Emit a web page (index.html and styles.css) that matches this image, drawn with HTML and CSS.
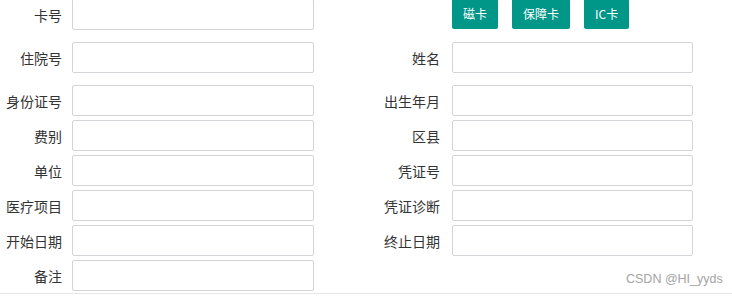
FILE: index.html
```html
<!DOCTYPE html>
<html lang="zh-CN">
<head>
<meta charset="utf-8">
<title>表单</title>
<link rel="stylesheet" href="styles.css">
</head>
<body>
<form class="form">
  <div class="row row-wide">
    <div class="field left"><label class="lbl">卡号</label><input class="inp" type="text"></div>
    <div class="field right"><span class="lbl"></span>
      <div class="btns"><button type="button" class="btn">磁卡</button><button type="button" class="btn">保障卡</button><button type="button" class="btn">IC卡</button></div>
    </div>
  </div>
  <div class="row row-wide">
    <div class="field left"><label class="lbl">住院号</label><input class="inp" type="text"></div>
    <div class="field right"><label class="lbl">姓名</label><input class="inp" type="text"></div>
  </div>
  <div class="row">
    <div class="field left"><label class="lbl">身份证号</label><input class="inp" type="text"></div>
    <div class="field right"><label class="lbl">出生年月</label><input class="inp" type="text"></div>
  </div>
  <div class="row">
    <div class="field left"><label class="lbl">费别</label><input class="inp" type="text"></div>
    <div class="field right"><label class="lbl">区县</label><input class="inp" type="text"></div>
  </div>
  <div class="row">
    <div class="field left"><label class="lbl">单位</label><input class="inp" type="text"></div>
    <div class="field right"><label class="lbl">凭证号</label><input class="inp" type="text"></div>
  </div>
  <div class="row">
    <div class="field left"><label class="lbl">医疗项目</label><input class="inp" type="text"></div>
    <div class="field right"><label class="lbl">凭证诊断</label><input class="inp" type="text"></div>
  </div>
  <div class="row">
    <div class="field left"><label class="lbl">开始日期</label><input class="inp" type="text"></div>
    <div class="field right"><label class="lbl">终止日期</label><input class="inp" type="text"></div>
  </div>
  <div class="row">
    <div class="field left"><label class="lbl">备注</label><input class="inp" type="text"></div>
  </div>
</form>
<div class="watermark">CSDN @HI_yyds</div>
</body>
</html>
```
FILE: styles.css
```css
html, body {
  margin: 0;
  padding: 0;
  background: #fff;
}
body {
  position: relative;
  width: 732px;
  height: 296px;
  overflow: hidden;
  font-family: "Noto Sans CJK SC", "Noto Sans", sans-serif;
  font-size: 14px;
  color: #333;
}
.form {
  margin: -1px 0 0 0;
  padding-bottom: 2px;
  border-bottom: 1px solid #e6e6e6;
  display: flex;
  flex-direction: column;
  gap: 4px;
}
.row {
  display: flex;
  height: 31px;
}
.row-wide {
  margin-bottom: 8px;
}
.field {
  display: flex;
  align-items: center;
  height: 31px;
}
.left .lbl {
  width: 62px;
  padding-right: 10px;
}
.right .lbl {
  width: 126px;
  padding-right: 12px;
}
.lbl {
  flex: none;
  text-align: right;
  line-height: 20px;
  color: #333;
  white-space: nowrap;
}
.left .inp {
  width: 242px;
}
.right .inp {
  width: 241px;
}
.inp {
  box-sizing: border-box;
  height: 31px;
  margin: 0;
  padding: 0 8px;
  border: 1px solid #d2d4d8;
  border-radius: 2px;
  background: #fff;
  font: inherit;
  outline: none;
}
.btns {
  display: flex;
  gap: 14px;
  align-self: flex-start;
}
.btn {
  height: 30px;
  padding: 0 11px;
  border: none;
  border-radius: 2px;
  background: #009688;
  color: #fff;
  font-family: "Noto Sans CJK SC", "Noto Sans", sans-serif;
  font-size: 12px;
  line-height: 30px;
  cursor: pointer;
}
.watermark {
  position: absolute;
  left: 626px;
  top: 271px;
  font-family: "Liberation Sans", Arial, sans-serif;
  font-size: 12.5px;
  line-height: 16px;
  color: #a3a3a3;
}
```
